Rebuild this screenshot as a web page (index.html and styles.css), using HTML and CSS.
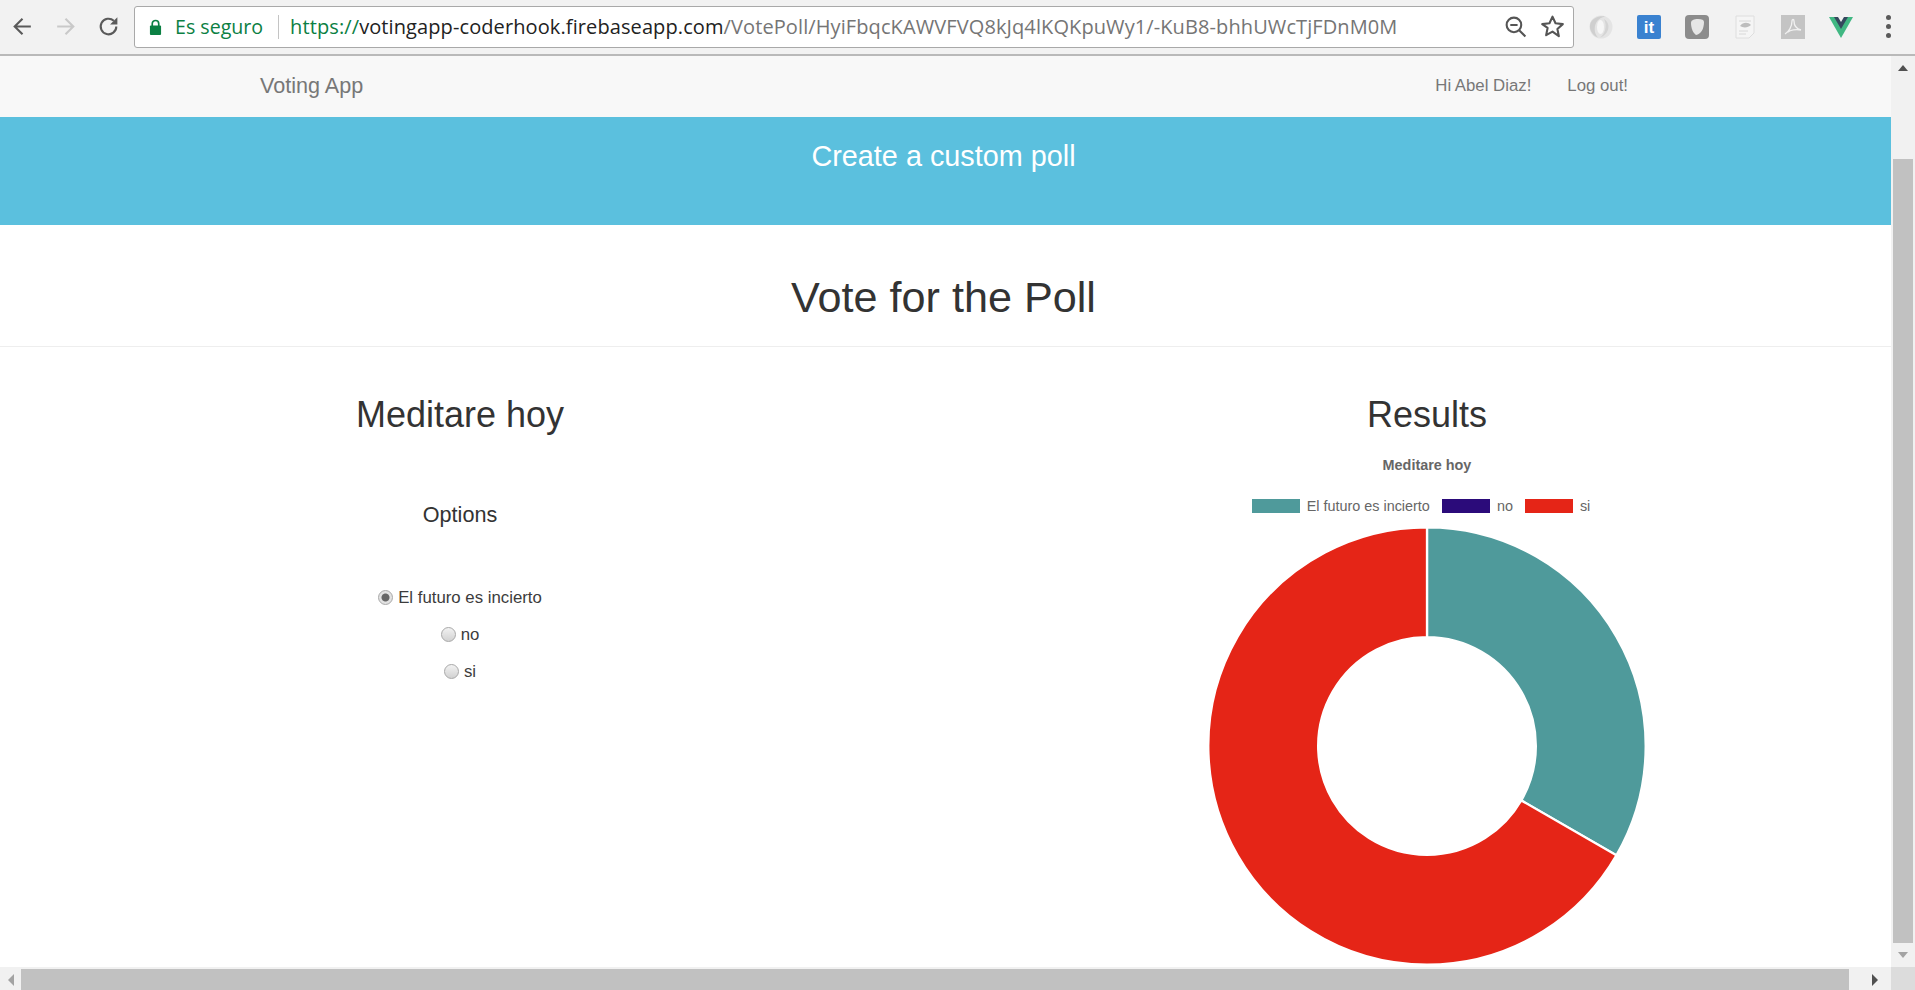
FILE: index.html
```html
<!DOCTYPE html>
<html lang="en">
<head>
<meta charset="UTF-8" />
<meta name="viewport" content="width=device-width, initial-scale=1" />
<title>Voting App</title>
<link rel="stylesheet" href="styles.css">
</head>
<body>

<div class="toolbar">
  <div class="nav-buttons">
    <svg class="tool-icon" viewBox="0 0 24 24"><path d="M20 12H5M12 4.500 4.500 12l7.500 7.500" fill="none" stroke="#5a5a5a" stroke-width="2"/></svg>
    <svg class="tool-icon" viewBox="0 0 24 24"><path d="M4 12h15M12 4.500l7.500 7.500-7.500 7.500" fill="none" stroke="#c9c9c9" stroke-width="2"/></svg>
    <svg class="tool-icon" viewBox="0 0 24 24"><path d="M19.500 12a7.500 7.500 0 1 1-2.400-5.500" fill="none" stroke="#5a5a5a" stroke-width="2"/><path d="M20.500 3v7h-7z" fill="#5a5a5a"/></svg>
  </div>
  <div class="omnibox">
    <svg class="lock" viewBox="0 0 14 18"><path d="M3.500 8V5.500a3.500 3.500 0 0 1 7 0V8" fill="none" stroke="#0b8043" stroke-width="1.800"/><rect x="1" y="7.500" width="12" height="10" rx="1" fill="#0b8043"/></svg>
    <span class="secure">Es seguro</span>
    <span class="url"><span class="url-green">https://</span><span class="url-host">votingapp-coderhook.firebaseapp.com</span>/VotePoll/HyiFbqcKAWVFVQ8kJq4lKQKpuWy1/-KuB8-bhhUWcTjFDnM0M</span>
    <svg class="omni-icon" viewBox="0 0 24 24"><circle cx="10.500" cy="10.500" r="7" fill="none" stroke="#555" stroke-width="2"/><path d="M7 10.500h7M15.500 15.500l6 6" stroke="#555" stroke-width="2" fill="none"/></svg>
    <svg class="omni-icon" viewBox="0 0 24 24"><path d="M12 2.500l2.900 6.400 7 .8-5.200 4.700 1.400 6.900L12 16.900l-6.100 3.400 1.400-6.900L2.100 9.700l7-.8z" fill="none" stroke="#555" stroke-width="2" stroke-linejoin="round"/></svg>
  </div>
  <div class="extensions">
    <svg class="ext" viewBox="0 0 24 24"><circle cx="12" cy="12" r="11.500" fill="#e4e4e4"/><path d="M16 1.500C9 3 4.500 9 6 17c.5 2 1.500 4 3 5.500C3 20 -.5 14 1.500 8 4 3 10 .5 16 1.500z" fill="#cfcfcf"/><path d="M15 4c5 3 6.500 10 1 15.500-1.500 1.500-3 2.500-5 3 5-3 7.500-12 4-18.500z" fill="#d4d4d4"/><ellipse cx="11.500" cy="12" rx="3.500" ry="7" fill="#f6f6f6"/></svg>
    <span class="ext ext-it">it</span>
    <svg class="ext" viewBox="0 0 24 24"><rect width="24" height="24" rx="4" fill="#8c8c8c"/><path d="M6 8c0-3 3-4 7-4s6 1 6 3c0 7-3 12-8 13-3-2-5-7-5-12z" fill="#e6e6e6"/></svg>
    <svg class="ext" viewBox="0 0 24 24"><path d="M3 1h18v17l-5 5H3z" fill="#f5f5f5" stroke="#dedede"/><path d="M6 6h12M6 16h9M6 19h7" stroke="#d8d8d8" fill="none"/><path d="M7 11c3-4 8-4 11-1-3 3-8 3-11 1z" fill="#bdbdbd"/></svg>
    <svg class="ext" viewBox="0 0 24 24"><rect width="24" height="24" fill="#c4c4c4"/><path d="M4 19c4-2 7-8 7-13 0-2 2-2 2 0 0 5 3 8 7 9-5-1-11 0-13 2" fill="none" stroke="#f1f1f1" stroke-width="1.300"/></svg>
    <svg class="ext" viewBox="0 0 24 24"><polygon points="0,2 24,2 12,23" fill="#41b883"/><polygon points="5,2 19,2 12,14" fill="#35495e"/><polygon points="9,2 15,2 12,7" fill="#f1f1f1"/></svg>
  </div>
  <div class="menu-dots"><i></i><i></i><i></i></div>
</div>

<div class="viewport">
  <div class="page">
    <nav class="navbar">
      <a class="brand">Voting App</a>
      <div class="nav-links">
        <a>Hi Abel Diaz!</a>
        <a>Log out!</a>
      </div>
    </nav>

    <div class="banner">
      <h3>Create a custom poll</h3>
    </div>

    <h1 class="page-title">Vote for the Poll</h1>
    <hr class="divider" />

    <div class="poll-row">
      <section class="poll-col">
        <h2>Meditare hoy</h2>
        <h4>Options</h4>
        <form class="options">
          <label><input type="radio" name="option" checked /> El futuro es incierto</label>
          <label><input type="radio" name="option" /> no</label>
          <label><input type="radio" name="option" /> si</label>
        </form>
      </section>

      <section class="poll-col">
        <h2>Results</h2>
        <div class="chart-title">Meditare hoy</div>
        <div class="legend">
          <span class="legend-item"><i class="swatch teal"></i>El futuro es incierto</span>
          <span class="legend-item"><i class="swatch navy"></i>no</span>
          <span class="legend-item"><i class="swatch red"></i>si</span>
        </div>
        <svg class="donut" viewBox="0 0 440 440">
          <path d="M220 1.300A218.700 218.700 0 0 1 409.400 329.350L314.270 274.430A108.850 108.850 0 0 0 220 111.150Z" fill="#4f9a9b" stroke="#fff" stroke-width="2.300"/>
          <path d="M409.400 329.350A218.700 218.700 0 1 1 220 1.300L220 111.150A108.850 108.850 0 1 0 314.270 274.430Z" fill="#e52517" stroke="#fff" stroke-width="2.300"/>
        </svg>
      </section>
    </div>
  </div>

  <div class="vscroll">
    <div class="arrow-box"><i class="tri tri-up"></i></div>
    <div class="vtrack"><div class="vthumb"></div></div>
    <div class="arrow-box"><i class="tri tri-down"></i></div>
  </div>
</div>

<div class="hscroll">
  <div class="harrow"><i class="tri tri-left"></i></div>
  <div class="hthumb"></div>
  <div class="harrow harrow-right"><i class="tri tri-right"></i></div>
  <div class="corner"></div>
</div>

</body>
</html>
```

FILE: styles.css
```css
* {
  box-sizing: border-box;
}
html, body {
  margin: 0;
  height: 990px;
  overflow: hidden;
}
body {
  display: flex;
  flex-direction: column;
  font-family: "Liberation Sans", Arial, sans-serif;
  color: #333;
  background: #fff;
}

/* browser chrome */
.toolbar {
  height: 56px;
  flex: none;
  display: flex;
  align-items: center;
  background: #f2f2f2;
  border-bottom: 2px solid #b9b9b9;
  padding-bottom: 1px;
}
.nav-buttons {
  width: 134px;
  flex: none;
  display: flex;
  gap: 18px;
  padding-left: 10px;
}
.tool-icon {
  width: 25px;
  height: 25px;
}
.omnibox {
  width: 1440px;
  height: 42px;
  flex: none;
  display: flex;
  align-items: center;
  background: #fff;
  border: 1px solid #a9a9a9;
  border-radius: 3px;
  padding: 0 8px 0 14px;
  font-family: "Open Sans", sans-serif;
  font-size: 20px;
  white-space: nowrap;
}
.lock {
  width: 13px;
  height: 18px;
  flex: none;
}
.secure {
  color: #0b8043;
  margin-left: 13px;
  padding-right: 15px;
  border-right: 1px solid #c4c4c4;
  line-height: 24px;
  font-size: 19.600px;
}
.url {
  color: #757575;
  margin-left: 11px;
  flex: 1;
  letter-spacing: 0.1px;
}
.url-green {
  color: #0b8043;
}
.url-host {
  color: #222;
}
.omni-icon {
  width: 25px;
  height: 25px;
  margin-left: 12px;
  flex: none;
}
.extensions {
  display: flex;
  gap: 24px;
  padding-left: 15px;
  flex: none;
}
.ext {
  width: 24px;
  height: 24px;
  display: block;
}
.ext-it {
  background: #3a82d0;
  color: #fff;
  border-radius: 2px;
  font-weight: bold;
  font-size: 17px;
  line-height: 25px;
  text-align: center;
}
.menu-dots {
  margin-left: 33px;
  display: flex;
  flex-direction: column;
  gap: 4px;
}
.menu-dots i {
  width: 5px;
  height: 5px;
  border-radius: 50%;
  background: #5a5a5a;
}

/* page */
.viewport {
  flex: 1;
  min-height: 0;
  display: flex;
}
.page {
  flex: 1;
  min-width: 0;
  overflow: hidden;
}
.navbar {
  height: 61px;
  display: flex;
  align-items: center;
  justify-content: space-between;
  padding: 0 263px 2px 260px;
  background: #f8f8f8;
  color: #777;
}
.brand {
  font-size: 21.600px;
}
.nav-links {
  display: flex;
  gap: 36px;
  font-size: 16.800px;
}
.banner {
  height: 108px;
  background: #5bc0de;
  color: #fff;
  text-align: center;
  padding-right: 4px;
}
.banner h3 {
  margin: 0;
  padding-top: 24px;
  font-size: 28.800px;
  font-weight: 500;
  line-height: 31px;
}
.page-title {
  margin: 48px 0 0;
  padding-right: 4px;
  text-align: center;
  font-size: 43.200px;
  font-weight: 500;
  line-height: 48px;
}
.divider {
  margin: 25px 0 0;
  border: 0;
  border-top: 1px solid #eee;
}
.poll-row {
  display: grid;
  grid-template-columns: 920px 920px;
  gap: 47px;
}
.poll-col {
  display: flex;
  flex-direction: column;
  align-items: center;
}
.poll-col h2 {
  margin: 48px 0 0;
  font-size: 36px;
  font-weight: 500;
  line-height: 40px;
}
.poll-col h4 {
  margin: 68px 0 0;
  font-size: 21.600px;
  font-weight: 500;
  line-height: 24px;
}
.options {
  margin-top: 59px;
  display: flex;
  flex-direction: column;
  align-items: center;
  gap: 14px;
  font-size: 16.800px;
  color: #3c3c3c;
}
.options label {
  display: flex;
  align-items: center;
  gap: 5px;
  line-height: 23px;
}
.options input {
  appearance: none;
  margin: 0;
  width: 15px;
  height: 15px;
  border-radius: 50%;
  border: 1px solid #a8a8a8;
  background: linear-gradient(#f2f2f2, #d2d2d2);
}
.options input:checked {
  background: radial-gradient(circle, #666 0 3.500px, #e2e2e2 4.500px);
}
.chart-title {
  margin-top: 22px;
  font-size: 14.400px;
  font-weight: bold;
  color: #666;
  line-height: 16px;
}
.legend {
  margin-top: 25px;
  padding-right: 12px;
  display: flex;
  gap: 12px;
  font-size: 14.400px;
  color: #666;
  line-height: 16px;
}
.legend-item {
  display: flex;
  align-items: center;
  gap: 7px;
}
.swatch {
  width: 48px;
  height: 14px;
  display: block;
}
.teal {
  background: #4f9a9b;
}
.navy {
  background: #2b0b7a;
}
.red {
  background: #e52517;
}
.donut {
  margin-top: 12px;
  width: 440px;
  height: 440px;
  flex: none;
}

/* scrollbars */
.vscroll {
  width: 24px;
  flex: none;
  display: flex;
  flex-direction: column;
  background: #f1f1f1;
}
.arrow-box {
  height: 24px;
  flex: none;
  display: flex;
  align-items: center;
  justify-content: center;
}
.vtrack {
  flex: 1;
  padding: 79px 2px 0;
}
.vthumb {
  height: 100%;
  background: #c1c1c1;
}
.hscroll {
  height: 23px;
  flex: none;
  display: flex;
  background: #f1f1f1;
  padding-top: 2px;
}
.harrow {
  width: 21px;
  flex: none;
  display: flex;
  align-items: center;
  justify-content: center;
}
.harrow-right {
  width: 42px;
  padding-left: 9px;
}
.hthumb {
  flex: 1;
  background: #c1c1c1;
}
.corner {
  width: 24px;
  flex: none;
  background: #dcdcdc;
  margin-top: -2px;
}
.tri {
  display: block;
  width: 0;
  height: 0;
  border: 6px solid transparent;
}
.tri-up {
  border-top: 0;
  border-bottom: 6px solid #505050;
  border-left-width: 5.500px;
  border-right-width: 5.500px;
}
.tri-down {
  border-bottom: 0;
  border-top: 6px solid #a3a3a3;
  border-left-width: 5.500px;
  border-right-width: 5.500px;
}
.tri-left {
  border-left: 0;
  border-right: 6px solid #a3a3a3;
}
.tri-right {
  border-right: 0;
  border-left: 6px solid #505050;
}
```
